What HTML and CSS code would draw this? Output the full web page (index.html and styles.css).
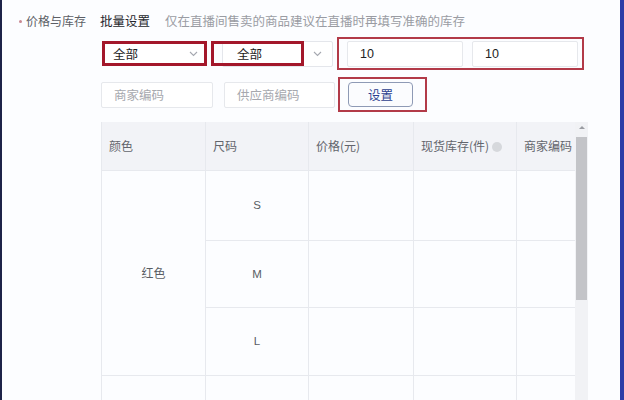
FILE: index.html
```html
<!DOCTYPE html>
<html lang="zh">
<head>
<meta charset="utf-8">
<link rel="stylesheet" href="styles.css">
</head>
<body>
<div class="screen">
  <div class="form">
    <div class="label"><span class="dot"></span>价格与库存</div>
    <div class="content">
      <div class="heading">
        <span class="title">批量设置</span>
        <span class="hint">仅在直播间售卖的商品建议在直播时再填写准确的库存</span>
      </div>
      <div class="row row1">
        <div class="select s1 mark-strong">
          <span class="sel-text">全部</span>
          <svg class="chev" width="9" height="6" viewBox="0 0 9 6"><path d="M1 1 L4.5 4.5 L8 1" fill="none" stroke="#a5a8b0" stroke-width="1.1"/></svg>
        </div>
        <div class="select s2">
          <span class="sel-text">全部</span>
          <svg class="chev" width="9" height="6" viewBox="0 0 9 6"><path d="M1 1 L4.5 4.5 L8 1" fill="none" stroke="#a5a8b0" stroke-width="1.1"/></svg>
          <div class="mark-overlay"></div>
        </div>
        <div class="mark group">
          <div class="input val i1">10</div>
          <div class="input val i2">10</div>
        </div>
      </div>
      <div class="row row2">
        <div class="input ph p1">商家编码</div>
        <div class="input ph p2">供应商编码</div>
        <div class="mark btn-box">
          <div class="btn">设置</div>
        </div>
      </div>
      <div class="table-wrap">
        <div class="table-clip">
          <table class="sku">
            <colgroup>
              <col class="c1"><col class="c2"><col class="c3"><col class="c4"><col class="c5">
            </colgroup>
            <thead>
              <tr>
                <th>颜色</th>
                <th>尺码</th>
                <th>价格(元)</th>
                <th>现货库存(件)<span class="q"></span></th>
                <th>商家编码</th>
              </tr>
            </thead>
            <tbody>
              <tr class="r-s">
                <td class="color" rowspan="3">红色</td>
                <td class="size">S</td>
                <td></td><td></td><td></td>
              </tr>
              <tr class="r-m">
                <td class="size">M</td>
                <td></td><td></td><td></td>
              </tr>
              <tr class="r-l">
                <td class="size">L</td>
                <td></td><td></td><td></td>
              </tr>
              <tr class="r-n">
                <td></td><td></td><td></td><td></td><td></td>
              </tr>
            </tbody>
          </table>
        </div>
        <div class="scrollbar">
          <div class="arrow"></div>
          <div class="thumb"></div>
        </div>
      </div>
    </div>
  </div>
</div>
</body>
</html>
```
FILE: styles.css
```css
* { box-sizing: border-box; }
html, body { margin: 0; padding: 0; }
body {
  width: 624px;
  height: 400px;
  overflow: hidden;
  background: #fcfdff;
  font-family: "Noto Sans CJK SC", "Noto Sans", sans-serif;
}
.screen {
  width: 624px;
  height: 400px;
  border-left: 2px solid #1d2348;
  border-right: 4px solid #2c3ca6;
  background: #fcfdff;
  overflow: hidden;
}
.form {
  display: flex;
  padding-left: 16px;
  padding-top: 12px;
}
.label {
  width: 83px;
  flex: none;
  display: flex;
  align-items: center;
  height: 18px;
  font-size: 12px;
  line-height: 18px;
  color: #5c5f66;
  white-space: nowrap;
}
.dot {
  width: 3px;
  height: 3px;
  border-radius: 50%;
  background: #c98891;
  margin-left: 1px;
  margin-right: 4px;
}
.content {
  flex: 1;
  min-width: 0;
}
.heading {
  display: flex;
  gap: 15px;
  height: 18px;
  font-size: 12.5px;
  line-height: 18px;
  white-space: nowrap;
  margin-left: -1px;
}
.title { color: #25272c; }
.hint { color: #9a9ca3; }

.row {
  display: flex;
  align-items: center;
}
.row1 {
  margin-top: 7px;
  height: 33px;
}
.row2 {
  margin-top: 7px;
  height: 35px;
}

.select {
  position: relative;
  display: flex;
  align-items: center;
  justify-content: space-between;
  height: 26px;
  border: 1px solid #e4e6eb;
  border-radius: 2px;
  background: #fff;
  font-size: 12.5px;
  color: #222;
}
.s1 {
  width: 105px;
  height: 25px;
  margin-left: 1px;
  padding: 0 6px 0 8px;
  border: 3px solid #a3172a;
  border-radius: 0;
}
.s2 {
  width: 111px;
  margin-left: 15px;
  padding: 0 10px 0 14px;
}
.mark-overlay {
  position: absolute;
  left: -12px;
  top: -1px;
  width: 93px;
  height: 25px;
  border: 3px solid #a3172a;
}
.chev { display: block; }

.mark {
  border: 2px solid #b23a48;
}
.group {
  margin-left: 4px;
  width: 247px;
  height: 33px;
  display: flex;
  align-items: center;
  padding: 0 4px 0 8px;
  gap: 9px;
}
.input {
  height: 26px;
  border: 1px solid #e6e8ec;
  border-radius: 2px;
  background: #fff;
  font-size: 12.5px;
  line-height: 24px;
  padding-left: 12px;
  white-space: nowrap;
}
.val {
  font-family: "Liberation Sans", "Noto Sans CJK SC", sans-serif;
  color: #222;
  font-size: 12.5px;
}
.i1 { width: 116px; }
.i2 { width: 106px; }
.ph { color: #a6a8ae; }
.p1 { width: 112px; }
.p2 { width: 111px; margin-left: 11px; }
.btn-box {
  margin-left: 3px;
  width: 89px;
  height: 35px;
  display: flex;
  align-items: center;
  padding-left: 8px;
}
.btn {
  width: 65px;
  height: 25px;
  border: 1px solid #8e9ab5;
  border-radius: 4px;
  background: #fbfcfe;
  color: #2d3f8e;
  font-size: 12.5px;
  line-height: 23px;
  text-align: center;
}

.table-wrap {
  margin-top: 10px;
  display: flex;
  width: 487px;
}
.table-clip {
  width: 474px;
  overflow: hidden;
  flex: none;
}
.sku {
  border-collapse: collapse;
  table-layout: fixed;
  width: 520px;
  font-size: 12px;
}
.c1 { width: 104px; }
.c2 { width: 103px; }
.c3 { width: 105px; }
.c4 { width: 103px; }
.c5 { width: 105px; }
.sku th, .sku td {
  border: 1px solid #e7e9ee;
  padding: 0;
}
.sku th {
  height: 48px;
  background: #f2f3f7;
  color: #62656c;
  font-weight: normal;
  text-align: left;
  padding-left: 7px;
  white-space: nowrap;
  border-top: none;
}
.q {
  display: inline-block;
  width: 10px;
  height: 10px;
  border-radius: 50%;
  background: #d6d8dc;
  margin-left: 3px;
  vertical-align: -1px;
}
.sku td {
  background: #fcfdff;
  color: #5a5d64;
  text-align: center;
}
.size {
  font-family: "Liberation Sans", sans-serif;
  color: #6b6e75;
  font-size: 11.5px;
}
.r-s td { height: 70px; }
.r-m td { height: 67px; }
.r-l td { height: 68px; }
.r-n td { height: 40px; }

.scrollbar {
  width: 13px;
  flex: none;
  height: 290px;
  background: #f1f2f5;
}
.arrow {
  width: 0;
  height: 0;
  margin: 4px auto 0;
  border-left: 3px solid transparent;
  border-right: 3px solid transparent;
  border-bottom: 3px solid #9a9ca2;
}
.thumb {
  margin: 8px 1px 0;
  height: 163px;
  background: #c3c4c8;
}
```
